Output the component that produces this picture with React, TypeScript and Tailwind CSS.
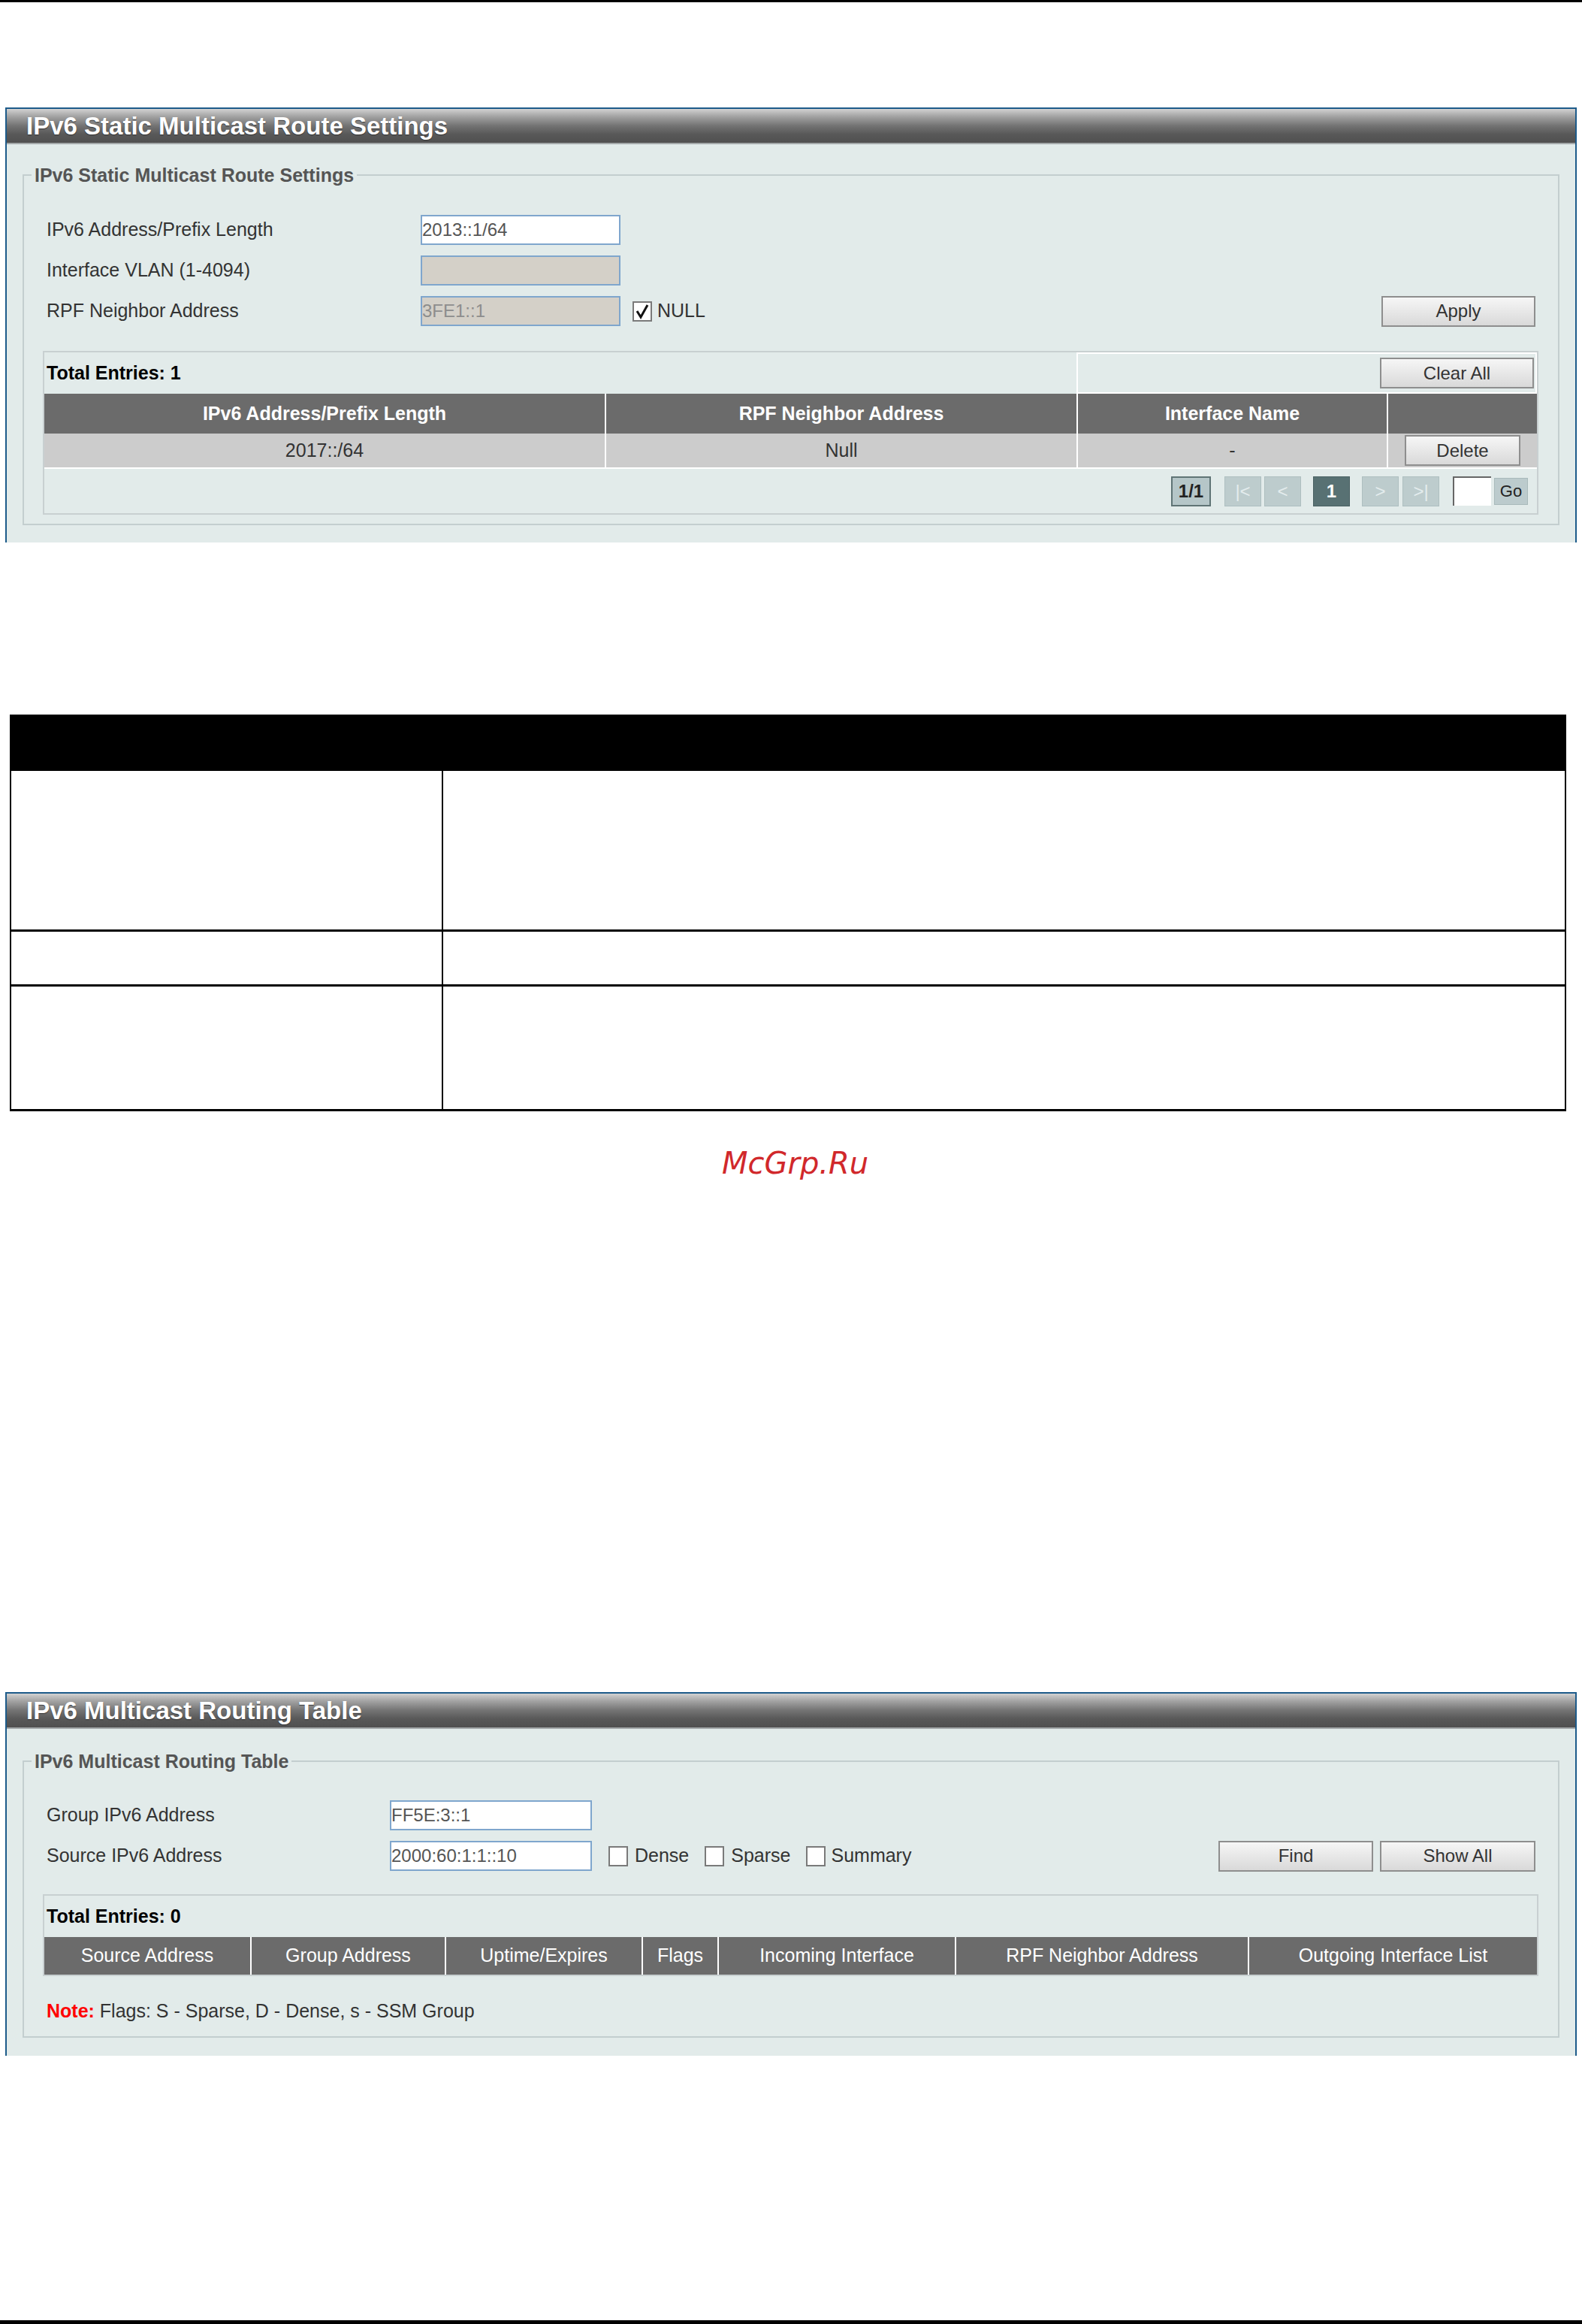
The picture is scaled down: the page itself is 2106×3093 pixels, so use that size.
import React from 'react';

const headerBg =
  'bg-[linear-gradient(to_bottom,#d2d2d2_0%,#a3a3a3_22%,#737373_50%,#585858_75%,#505050_100%)]';

function Panel({ title, children }: { title: string; children: React.ReactNode }) {
  return (
    <div className="border-x-2 border-t-2 border-[#1d5b8a] bg-[#e2ebea]">
      <div className={`h-[47px] flex items-center pl-[26px] border-b-2 border-[#a3a8a9] ${headerBg}`}>
        <span className="text-[33px] font-bold text-white leading-none [text-shadow:0_1px_1px_#333]">
          {title}
        </span>
      </div>
      {children}
    </div>
  );
}

function Field({ value, disabled, w = 'w-[266px]' }: { value: string; disabled?: boolean; w?: string }) {
  return (
    <input
      readOnly
      value={value}
      className={`${w} h-[40px] border-2 border-[#7fa6cd] px-0 text-[24px] leading-none outline-none ${
        disabled ? 'bg-[#d4d0c8] text-[#8d8d8d]' : 'bg-white text-[#555]'
      }`}
    />
  );
}

function Btn({ label, w }: { label: string; w: string }) {
  return (
    <button
      className={`${w} h-[41px] border-2 border-[#8e8e8e] bg-[linear-gradient(to_bottom,#f6f6f6,#d9d9d9)] text-[24px] text-[#333] leading-none`}
    >
      {label}
    </button>
  );
}

function Box({ checked }: { checked?: boolean }) {
  return (
    <span className="w-[26px] h-[27px] border-2 border-[#7a7a7a] bg-white flex items-center justify-center shrink-0">
      {checked && (
        <svg width="20" height="22" viewBox="0 0 20 22">
          <path d="M3 11 L8 19 L17 3" fill="none" stroke="#111" strokeWidth="3" />
        </svg>
      )}
    </span>
  );
}

function Legend({ text }: { text: string }) {
  return (
    <legend className="ml-[10px] px-[4px] text-[25px] font-bold text-[#555] leading-[28px]">{text}</legend>
  );
}

function StaticRoutePanel() {
  return (
    <Panel title="IPv6 Static Multicast Route Settings">
      <div className="px-[21px] pt-[27px] pb-[23px]">
        <fieldset className="border-2 border-[#c3cecf] p-0">
          <Legend text="IPv6 Static Multicast Route Settings" />
          <div className="pl-[25px] pr-[26px] pb-[12px]">
            <div className="pt-[39px] pl-[5px] pr-[4px] flex flex-col gap-[14px]">
              <div className="flex items-center h-[40px]">
                <div className="w-[498px]">IPv6 Address/Prefix Length</div>
                <Field value="2013::1/64" />
              </div>
              <div className="flex items-center h-[40px]">
                <div className="w-[498px]">Interface VLAN (1-4094)</div>
                <Field value="" disabled />
              </div>
              <div className="flex items-center h-[40px]">
                <div className="w-[498px]">RPF Neighbor Address</div>
                <Field value="3FE1::1" disabled />
                <span className="ml-[16px]">
                  <Box checked />
                </span>
                <span className="ml-[7px]">NULL</span>
                <span className="ml-auto">
                  <Btn label="Apply" w="w-[205px]" />
                </span>
              </div>
            </div>

            <div className="mt-[33px] border-2 border-[#c8d0d1]">
              <div className="flex h-[55px]">
                <div className="w-[1374px] flex items-center pl-[3px] font-bold text-black">Total Entries: 1</div>
                <div className="flex-1 border-2 border-white flex items-center justify-end pr-[2px]">
                  <Btn label="Clear All" w="w-[205px]" />
                </div>
              </div>
              <div className="grid grid-cols-[746px_628px_413px_1fr] h-[53px] bg-[#6b6b6b] text-white font-bold">
                <div className="flex items-center justify-center">IPv6 Address/Prefix Length</div>
                <div className="flex items-center justify-center border-l-2 border-white">RPF Neighbor Address</div>
                <div className="flex items-center justify-center border-l-2 border-white">Interface Name</div>
                <div className="border-l-2 border-white" />
              </div>
              <div className="grid grid-cols-[746px_628px_413px_1fr] h-[47px] bg-[#cccccc] border-b-2 border-white">
                <div className="flex items-center justify-center">2017::/64</div>
                <div className="flex items-center justify-center border-l-2 border-white">Null</div>
                <div className="flex items-center justify-center border-l-2 border-white">-</div>
                <div className="flex items-center justify-center border-l-2 border-white">
                  <Btn label="Delete" w="w-[154px]" />
                </div>
              </div>
              <div className="h-[59px] flex items-center justify-end pr-[12px] text-[24px]">
                <span className="w-[53px] h-[40px] flex items-center justify-center border-2 border-[#5f7475] bg-[#b5c6c8] font-bold text-[#222]">
                  1/1
                </span>
                <span className="ml-[18px] w-[49px] h-[40px] flex items-center justify-center border border-[#aebfc0] bg-[#bdcccd] text-[#e4eced]">
                  |&lt;
                </span>
                <span className="ml-[4px] w-[49px] h-[40px] flex items-center justify-center border border-[#aebfc0] bg-[#bdcccd] text-[#e4eced]">
                  &lt;
                </span>
                <span className="ml-[16px] w-[49px] h-[40px] flex items-center justify-center border border-[#4a6163] bg-[#587173] font-bold text-white">
                  1
                </span>
                <span className="ml-[16px] w-[49px] h-[40px] flex items-center justify-center border border-[#aebfc0] bg-[#bdcccd] text-[#e4eced]">
                  &gt;
                </span>
                <span className="ml-[5px] w-[49px] h-[40px] flex items-center justify-center border border-[#aebfc0] bg-[#bdcccd] text-[#e4eced]">
                  &gt;|
                </span>
                <span className="ml-[18px] w-[51px] h-[39px] bg-white border-l-2 border-t-2 border-[#666]" />
                <span className="ml-[4px] w-[45px] h-[36px] flex items-center justify-center border border-[#a9babb] bg-[#bccbcd] text-[22px] text-[#222]">
                  Go
                </span>
              </div>
            </div>
          </div>
        </fieldset>
      </div>
    </Panel>
  );
}

function RoutingTablePanel() {
  const cols = [
    ['Source Address', 'w-[274px]'],
    ['Group Address', 'w-[259px]'],
    ['Uptime/Expires', 'w-[262px]'],
    ['Flags', 'w-[101px]'],
    ['Incoming Interface', 'w-[316px]'],
    ['RPF Neighbor Address', 'w-[390px]'],
    ['Outgoing Interface List', 'flex-1'],
  ];
  return (
    <Panel title="IPv6 Multicast Routing Table">
      <div className="px-[21px] pt-[29px] pb-[24px]">
        <fieldset className="border-2 border-[#c3cecf] p-0">
          <Legend text="IPv6 Multicast Routing Table" />
          <div className="pl-[25px] pr-[26px] pb-[20px]">
            <div className="pt-[38px] pl-[5px] pr-[4px] flex flex-col gap-[14px]">
              <div className="flex items-center h-[40px]">
                <div className="w-[457px]">Group IPv6 Address</div>
                <Field value="FF5E:3::1" w="w-[269px]" />
              </div>
              <div className="flex items-center h-[40px]">
                <div className="w-[457px]">Source IPv6 Address</div>
                <Field value="2000:60:1:1::10" w="w-[269px]" />
                <span className="ml-[22px]">
                  <Box />
                </span>
                <span className="ml-[9px]">Dense</span>
                <span className="ml-[21px]">
                  <Box />
                </span>
                <span className="ml-[9px]">Sparse</span>
                <span className="ml-[21px]">
                  <Box />
                </span>
                <span className="ml-[7px]">Summary</span>
                <span className="ml-auto flex gap-[9px]">
                  <Btn label="Find" w="w-[206px]" />
                  <Btn label="Show All" w="w-[207px]" />
                </span>
              </div>
            </div>

            <div className="mt-[31px] border-2 border-[#c8d0d1]">
              <div className="h-[55px] flex items-center pl-[3px] font-bold text-black">Total Entries: 0</div>
              <div className="flex h-[50px] bg-[#6b6b6b] text-white">
                {cols.map(([label, w], i) => (
                  <div
                    key={label}
                    className={`${w} flex items-center justify-center ${i > 0 ? 'border-l-2 border-white' : ''}`}
                  >
                    {label}
                  </div>
                ))}
              </div>
            </div>

            <div className="mt-[32px] pl-[5px] leading-[28px]">
              <span className="text-[#ff0000] font-bold">Note:</span> Flags: S - Sparse, D - Dense, s - SSM Group
            </div>
          </div>
        </fieldset>
      </div>
    </Panel>
  );
}

function DescriptionTable() {
  return (
    <div className="ml-[13px] w-[2072px] border-x-2 border-b-[3px] border-black">
      <div className="h-[75px] bg-black" />
      <div className="flex h-[211px]">
        <div className="w-[575px] border-r-2 border-black" />
        <div className="flex-1" />
      </div>
      <div className="flex h-[73px] border-t-[3px] border-black">
        <div className="w-[575px] border-r-2 border-black" />
        <div className="flex-1" />
      </div>
      <div className="flex h-[166px] border-t-[3px] border-black">
        <div className="w-[575px] border-r-2 border-black" />
        <div className="flex-1" />
      </div>
    </div>
  );
}

export default function App() {
  return (
    <div className="relative w-[2106px] h-[3093px] overflow-hidden bg-white font-['Liberation_Sans',Arial,sans-serif] text-[25px] text-[#333]">
      <div className="h-[3px] bg-black" />
      <div className="pt-[140px] px-[7px]">
        <StaticRoutePanel />
      </div>

      <div className="mt-[229px]">
        <DescriptionTable />
      </div>

      <div className="mt-[49px] pl-[961px] h-[40px] leading-[40px] text-[40px] italic text-[#d1282b] font-['DejaVu_Sans',sans-serif]">
        McGrp.Ru
      </div>

      <div className="mt-[684px] px-[7px]">
        <RoutingTablePanel />
      </div>

      <div className="absolute left-0 right-0 bottom-0 h-[5px] bg-black" />
    </div>
  );
}
